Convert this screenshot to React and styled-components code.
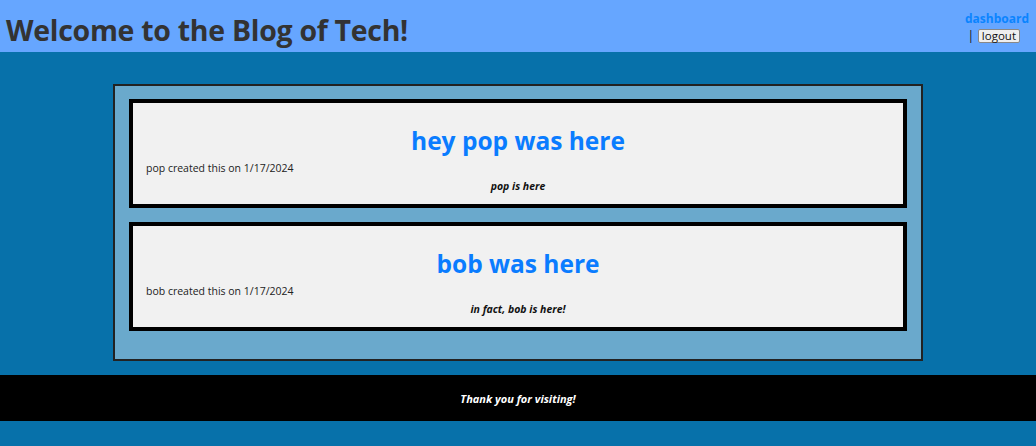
import React from 'react';
import styled, { createGlobalStyle } from 'styled-components';

const posts = [
    { id: 1, title: 'hey pop was here', author: 'pop', date: '1/17/2024', body: 'pop is here' },
    { id: 2, title: 'bob was here', author: 'bob', date: '1/17/2024', body: 'in fact, bob is here!' },
];

function App() {
    return (
        <>
            <GlobalStyle />
            <Header>
                <Title>Welcome to the Blog of Tech!</Title>
                <Nav>
                    <NavLink href="#">dashboard</NavLink>
                    <NavRow>| <LogoutButton>logout</LogoutButton></NavRow>
                </Nav>
            </Header>

            <Main>
                {posts.map((post) => (
                    <PostCard key={post.id}>
                        <PostTitle>{post.title}</PostTitle>
                        <PostMeta>{post.author} created this on {post.date}</PostMeta>
                        <PostBody>{post.body}</PostBody>
                    </PostCard>
                ))}
            </Main>

            <Footer>Thank you for visiting!</Footer>
        </>
    );
}

const GlobalStyle = createGlobalStyle`
    html, body {
        margin: 0;
        padding: 0;
    }
    body {
        background-color: #0771aa;
        font-family: "Open Sans", "Noto Sans", sans-serif;
        color: #222;
    }
`

const Header = styled.header`
    display: flex;
    justify-content: space-between;
    align-items: flex-start;
    height: 52px;
    padding: 0 7px 0 6px;
    background-color: #66a6ff;
    box-sizing: border-box;
`

const Title = styled.h1`
    margin: 10px 0 0 0;
    font-size: 28.5px;
    line-height: 40px;
    font-weight: 700;
    color: #333;
    letter-spacing: -0.3px;
`

const Nav = styled.div`
    display: flex;
    flex-direction: column;
    align-items: flex-end;
    margin-top: 11px;
`

const NavLink = styled.a`
    font-size: 12px;
    line-height: 16px;
    font-weight: 700;
    color: #0a84ff;
    text-decoration: none;
`

const NavRow = styled.div`
    font-size: 13px;
    line-height: 16px;
    color: #222;
    margin-right: 9px;
`

const LogoutButton = styled.button`
    font-family: "Open Sans", sans-serif;
    font-size: 11.5px;
    padding: 0 3px;
    height: 14px;
    line-height: 12px;
    border: 1px solid #888;
    border-radius: 2px;
    background: #efefef;
    color: #111;
`

const Main = styled.main`
    width: 810px;
    margin: 32px auto 14px;
    padding: 13px 14px 14px;
    background-color: #6aa9cc;
    border: 2px solid #222;
    box-sizing: border-box;
`

const PostCard = styled.section`
    display: flex;
    flex-direction: column;
    height: 109px;
    margin-bottom: 14px;
    padding: 21px 13px 0;
    background-color: #f1f1f1;
    border: 4px solid #000;
    box-sizing: border-box;
`

const PostTitle = styled.h2`
    margin: 0;
    text-align: center;
    font-size: 24.5px;
    line-height: 34px;
    font-weight: 700;
    color: #0a7cff;
`

const PostMeta = styled.p`
    margin: 2px 0 0;
    font-size: 10.5px;
    line-height: 16px;
    color: #222;
`

const PostBody = styled.p`
    margin: 2px 0 0;
    text-align: center;
    font-size: 10.5px;
    line-height: 16px;
    font-weight: 700;
    font-style: italic;
    color: #111;
`

const Footer = styled.footer`
    display: flex;
    justify-content: center;
    align-items: center;
    height: 46px;
    background-color: #000;
    color: #fff;
    font-size: 11px;
    font-weight: 700;
    font-style: italic;
`

export default App;
